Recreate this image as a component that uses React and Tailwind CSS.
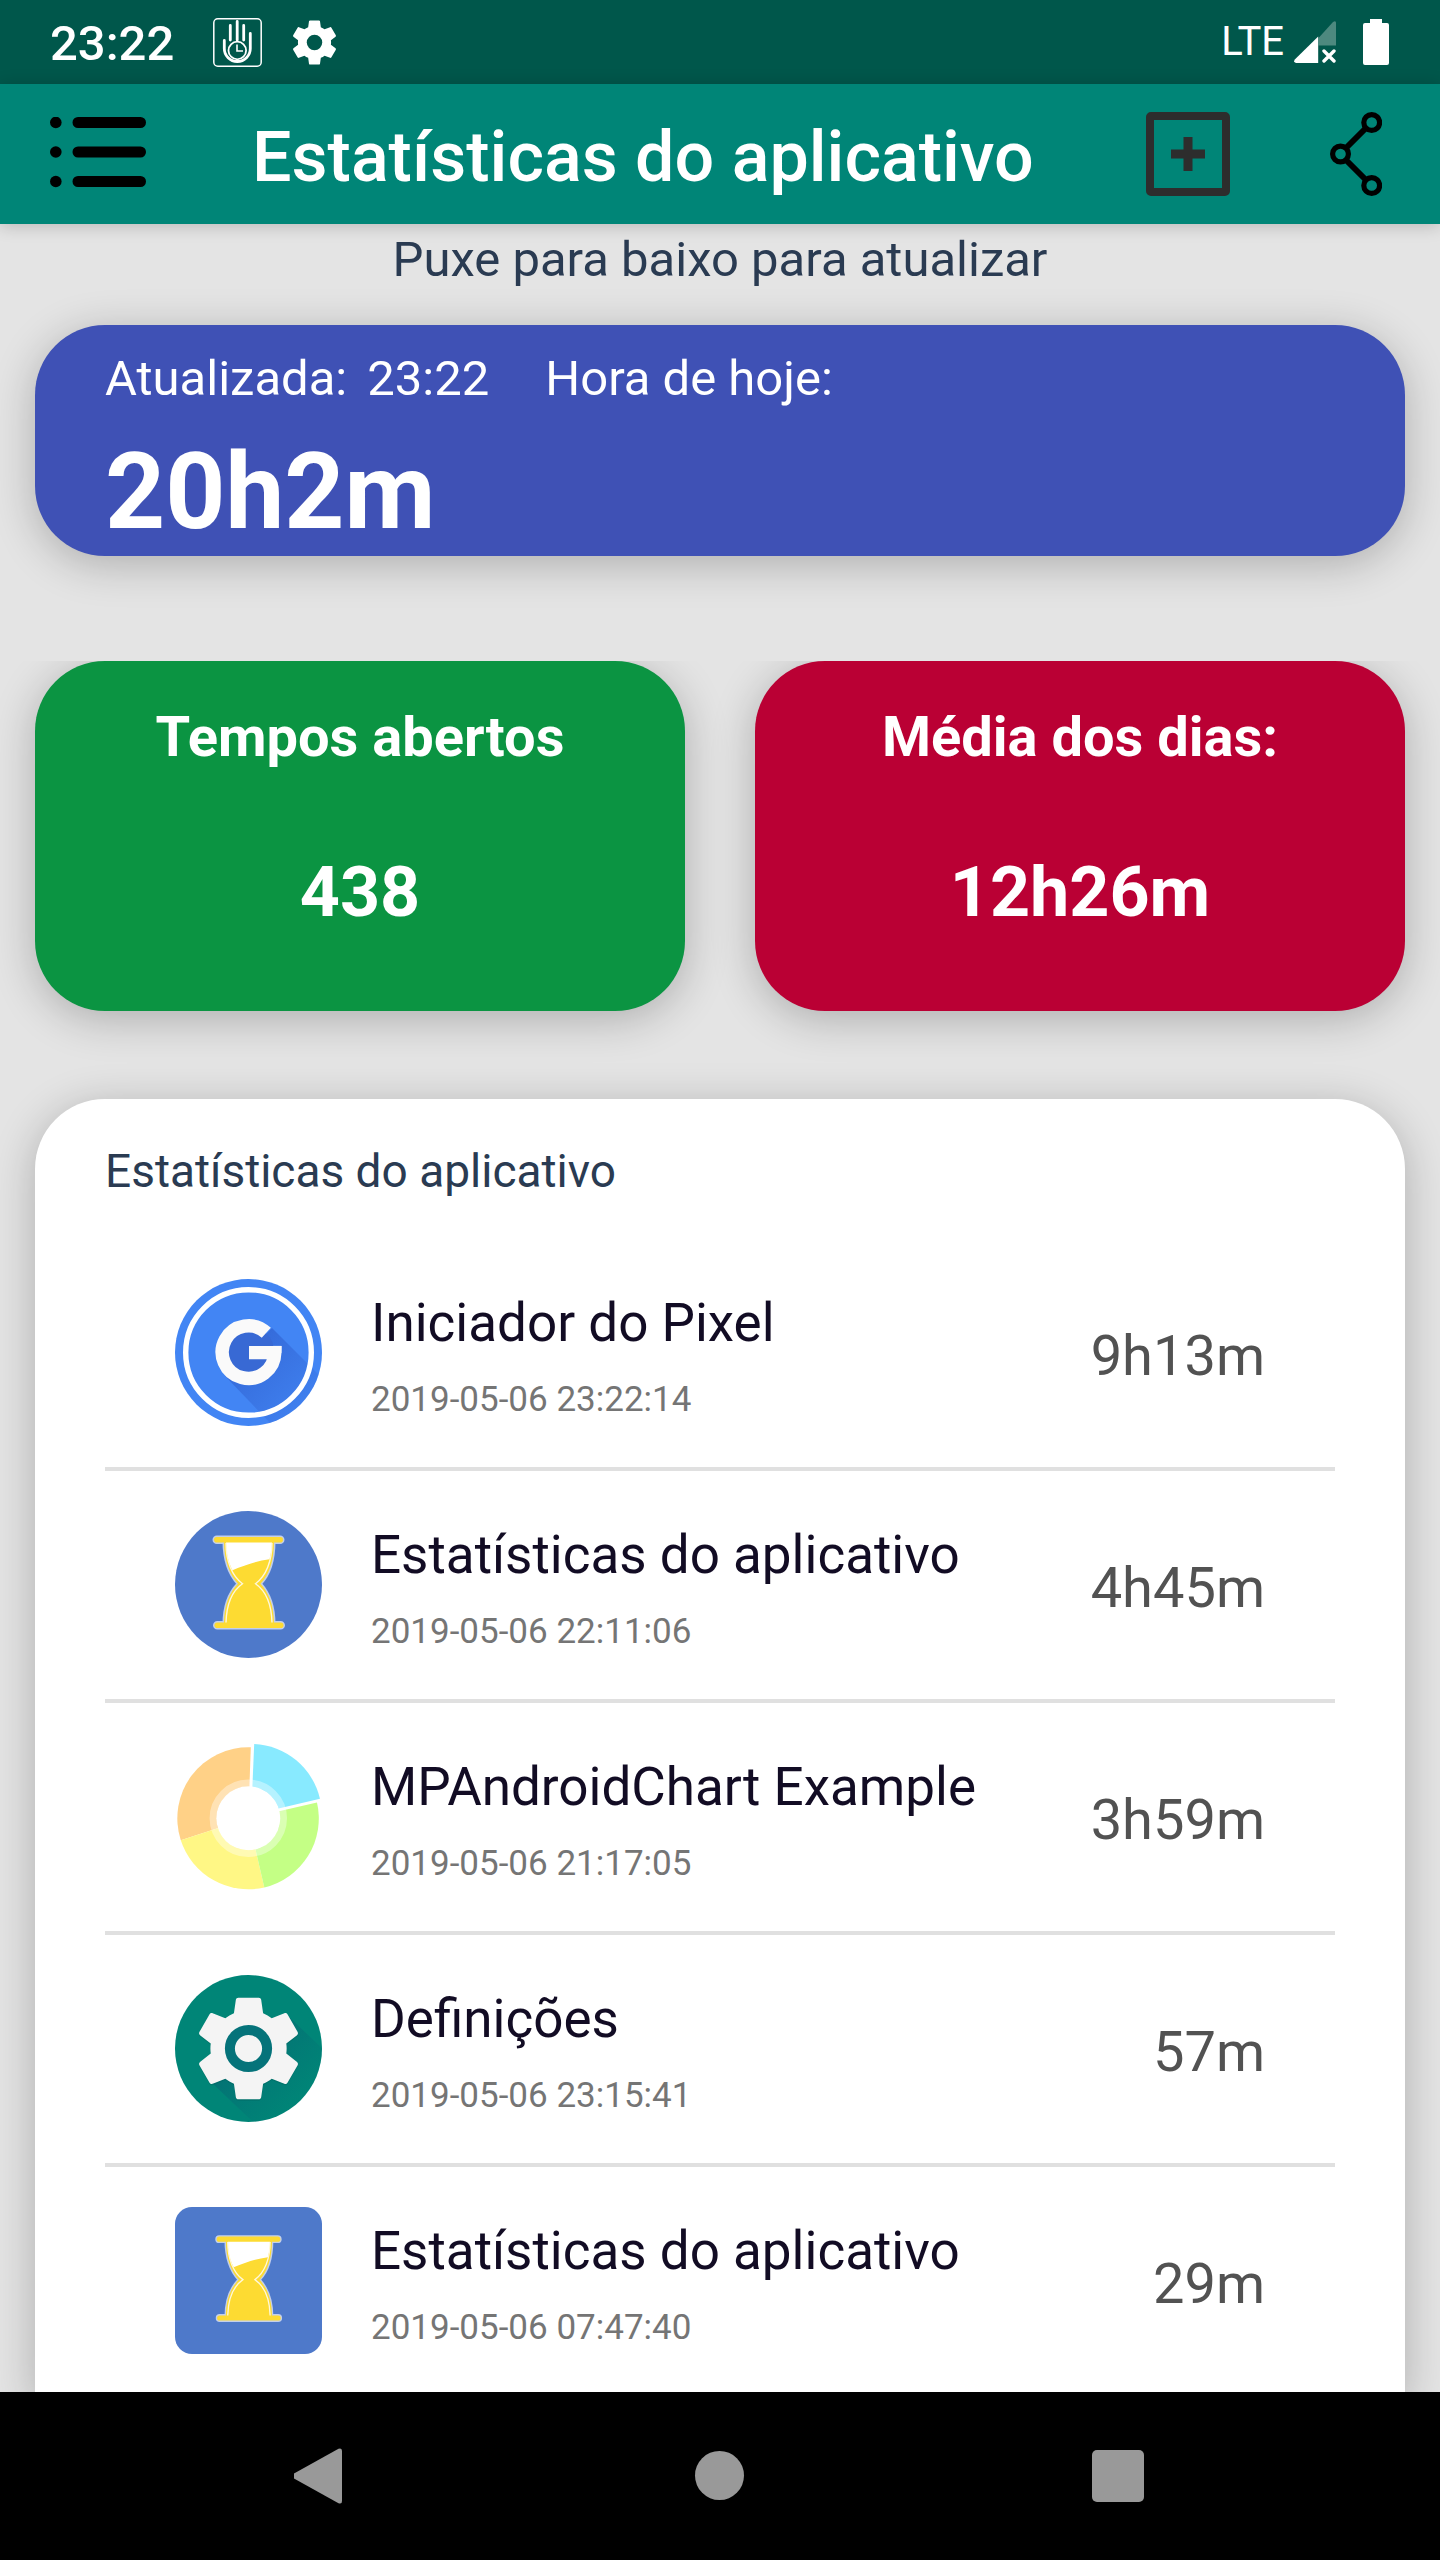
import React from 'react'

const GEAR = 'M19.43 12.98c.04-.32.07-.64.07-.98s-.03-.66-.07-.98l2.11-1.65c.19-.15.24-.42.12-.64l-2-3.46c-.12-.22-.39-.3-.61-.22l-2.49 1c-.52-.4-1.08-.73-1.69-.98l-.38-2.65C14.46 2.18 14.25 2 14 2h-4c-.25 0-.46.18-.49.42l-.38 2.65c-.61.25-1.17.59-1.69.98l-2.49-1c-.23-.09-.49 0-.61.22l-2 3.46c-.13.22-.07.49.12.64l2.11 1.65c-.04.32-.07.65-.07.98s.03.66.07.98l-2.11 1.65c-.19.15-.24.42-.12.64l2 3.46c.12.22.39.3.61.22l2.49-1c.52.4 1.08.73 1.69.98l.38 2.65c.03.24.24.42.49.42h4c.25 0 .46-.18.49-.42l.38-2.65c.61-.25 1.17-.59 1.69-.98l2.49 1c.23.09.49 0 .61-.22l2-3.46c.12-.22.07-.49-.12-.64l-2.11-1.65z'

const PixelIcon = () => (
  <svg viewBox='0 0 147 147' className='size-full' aria-hidden='true'>
    <defs>
      <linearGradient id='pixelShade' x1='60' y1='60' x2='126' y2='126' gradientUnits='userSpaceOnUse'>
        <stop offset='0' stopColor='#3367d6' />
        <stop offset='1' stopColor='#3367d6' stopOpacity='0.2' />
      </linearGradient>
      <clipPath id='pixelClip'><circle cx='73.5' cy='73.5' r='73.5' /></clipPath>
    </defs>
    <circle cx='73.5' cy='73.5' r='73.5' fill='#4285f4' />
    <g clipPath='url(#pixelClip)'>
      <path d='M97 49 L147 99 V147 H98 L50 97 Z' fill='url(#pixelShade)' />
      <circle cx='73.5' cy='73.5' r='26' fill='#3869d4' />
    </g>
    <circle cx='73.5' cy='73.5' r='62.8' fill='none' stroke='#fff' strokeWidth='5.4' />
    <path d='M91.3 53.8 A26.3 26.3 0 1 0 99.8 73.6 H74' fill='none' stroke='#fafafa' strokeWidth='13.4' />
    <rect x='98' y='66.9' width='8.4' height='7' fill='#fafafa' />
  </svg>
)

const Hourglass = () => (
  <g>
    <g fill='#fdd835' stroke='#c3cfea' strokeWidth='3'>
      <path d='M49 30 C49 50 55 64 63 72.7 C55 81 49 93 49 113 H99 C99 93 93 81 85.5 72.7 C94 64 99 50 99 30 Z' />
      <rect x='39' y='26' width='69' height='5.6' rx='2.8' />
      <rect x='39.5' y='111.5' width='69' height='5.6' rx='2.8' />
    </g>
    <g fill='#fddb32'>
      <path d='M49 30 C49 50 55 64 63 72.7 C55 81 49 93 49 113 H99 C99 93 93 81 85.5 72.7 C94 64 99 50 99 30 Z' />
      <rect x='39' y='26' width='69' height='5.6' rx='2.8' />
      <rect x='39.5' y='111.5' width='69' height='5.6' rx='2.8' />
    </g>
    <path d='M51 31.6 H97 C97 37 96 43 94.5 48.3 C82 50 70 54 57.5 59.3 C53 51 51 41 51 31.6 Z' fill='#fff' />
    <path d='M51 32 C51 50 57 65 67.5 72.7 C57 80 51.5 94 51 111.5 M97 32 C97 50 91 65 80.5 72.7 C91 80 96.5 94 97 111.5' fill='none' stroke='#fff8dc' strokeWidth='1.4' />
  </g>
)

const HourglassRoundIcon = () => (
  <svg viewBox='0 0 147 147' className='size-full' aria-hidden='true'>
    <circle cx='73.5' cy='73.5' r='73.5' fill='#4e79ca' />
    <Hourglass />
  </svg>
)

const HourglassSquareIcon = () => (
  <svg viewBox='0 0 147 147' className='size-full' aria-hidden='true'>
    <rect width='147' height='147' rx='17' fill='#4e79ca' />
    <g transform='translate(5.7 5.6) scale(0.922)'>
      <Hourglass />
    </g>
  </svg>
)

const ChartIcon = () => (
  <svg viewBox='0 0 147 147' className='size-full' aria-hidden='true'>
    <path d='M73.3 75.3 L75.8 4.3 A71 71 0 0 0 5.8 97.2 Z' fill='#ffd187' />
    <path d='M73.3 75.3 L5.8 97.2 A71 71 0 0 0 89.3 144.5 Z' fill='#fff785' />
    <path d='M73.3 75.3 L89.3 144.5 A71 71 0 0 0 142 59.5 Z' fill='#c4ff85' />
    <path d='M73.3 75.3 L77.2 2 L144 57 Z' fill='#fff' />
    <path d='M76.2 72 L79.2 1 A71 71 0 0 1 145 55.8 Z' fill='#88eaff' />
    <circle cx='73.3' cy='75.3' r='35.3' fill='none' stroke='#fff' strokeOpacity='0.38' strokeWidth='6.8' />
    <circle cx='73.3' cy='75.3' r='32' fill='#fff' />
  </svg>
)

const SettingsIcon = () => (
  <svg viewBox='0 0 147 147' className='size-full' aria-hidden='true'>
    <defs>
      <linearGradient id='gearShade' x1='50' y1='50' x2='122' y2='122' gradientUnits='userSpaceOnUse'>
        <stop offset='0' stopColor='#056b73' />
        <stop offset='1' stopColor='#056b73' stopOpacity='0.05' />
      </linearGradient>
      <clipPath id='gearClip'><circle cx='73.5' cy='73.5' r='73.5' /></clipPath>
    </defs>
    <circle cx='73.5' cy='73.5' r='73.5' fill='#008577' />
    <path d='M113 41 L150 76 V147 H78 L35 106 Z' fill='url(#gearShade)' clipPath='url(#gearClip)' />
    <g transform='translate(12.5 12.5) scale(5.085)'>
      <path d={GEAR} fill='#00564f' fillOpacity='0.25' transform='translate(0 0.25)' />
      <path d={GEAR} fill='#f4f4f4' />
    </g>
    <circle cx='73.5' cy='73.5' r='18.6' fill='#f4f4f4' stroke='#05737a' strokeWidth='10' />
  </svg>
)

const apps = [
  { name: 'Iniciador do Pixel', date: '2019-05-06 23:22:14', time: '9h13m', icon: PixelIcon },
  { name: 'Estatísticas do aplicativo', date: '2019-05-06 22:11:06', time: '4h45m', icon: HourglassRoundIcon },
  { name: 'MPAndroidChart Example', date: '2019-05-06 21:17:05', time: '3h59m', icon: ChartIcon },
  { name: 'Definições', date: '2019-05-06 23:15:41', time: '57m', icon: SettingsIcon },
  { name: 'Estatísticas do aplicativo', date: '2019-05-06 07:47:40', time: '29m', icon: HourglassSquareIcon },
]

const StatusBar = () => (
  <div className='flex h-[84px] shrink-0 items-center bg-[#00574b] pl-[50px] pr-[51px] text-white'>
    <span className='pt-1 text-[49px] leading-[60px] font-medium'>23:22</span>
    <svg viewBox='0 0 49 49' className='ml-[39px] size-[49px]' fill='none' stroke='#fff' aria-hidden='true'>
      <rect x='0.8' y='0.8' width='47.4' height='47.4' rx='4' strokeWidth='1.5' />
      <path d='M17.3 7.5 V22 M24.2 3.5 V22 M30.7 7.5 V22' strokeWidth='2.8' strokeLinecap='round' />
      <path d='M11.3 22.5 V30.5 A13 13 0 0 0 37.3 30.5 V15.5' strokeWidth='2.8' strokeLinecap='round' />
      <circle cx='24.3' cy='32.5' r='8.8' strokeWidth='1.8' />
      <path d='M24 26.5 V33 H30' strokeWidth='1.6' />
    </svg>
    <svg viewBox='0 0 24 24' className='ml-[26px] size-[53px]' aria-hidden='true'>
      <path d={GEAR} fill='#fff' />
      <circle cx='12' cy='12' r='3.5' fill='#00574b' />
    </svg>
    <div className='ml-auto flex items-center'>
      <span className='text-[40px] leading-[60px]'>LTE</span>
      <svg viewBox='0 0 42 42' className='ml-[10px] size-[42px]' aria-hidden='true'>
        <path d='M24.5 17 L39 1 Q42 -1 42 2 V24.5 H24.5 Z' fill='#4d897f' />
        <path d='M24.2 15.5 V42 H2 Q-1 41 0.8 38.5 Z' fill='#fff' />
        <path d='M30 30 L40 40 M40 30 L30 40' stroke='#fff' strokeWidth='3.4' strokeLinecap='round' />
      </svg>
      <svg viewBox='0 0 26 46' className='ml-[27px] h-[46px] w-[26px]' fill='#fff' aria-hidden='true'>
        <path d='M7 0 H19 V4 H24 Q26 4 26 6 V44 Q26 46 24 46 H2 Q0 46 0 44 V6 Q0 4 2 4 H7 Z' />
      </svg>
    </div>
  </div>
)

const AppBar = () => (
  <header className='z-10 flex h-[140px] shrink-0 items-center bg-[#008577] pl-[50px] pr-[58px] shadow-[0_2px_16px_rgba(0,0,0,0.2)]'>
    <button type='button' aria-label='Menu' className='shrink-0'>
      <svg viewBox='0 0 96 75' className='h-[75px] w-[96px]'>
        <g stroke='#000' strokeWidth='11' strokeLinecap='round'>
          <path d='M28 5.5 H90.5 M28 35 H90.5 M28 64.5 H90.5' />
        </g>
        <circle cx='5.8' cy='5.5' r='5.8' />
        <circle cx='5.8' cy='35' r='5.8' />
        <circle cx='5.8' cy='64.5' r='5.8' />
      </svg>
    </button>
    <h1 className='ml-[106px] flex-1 pt-1.5 text-[70px] leading-[84px] font-medium text-white'>Estatísticas do aplicativo</h1>
    <button type='button' aria-label='Adicionar' className='shrink-0'>
      <svg viewBox='0 0 84 84' className='size-[84px]' fill='none' stroke='#2d2d2d' strokeWidth='8'>
        <rect x='4' y='4' width='76' height='76' rx='1' strokeLinejoin='round' />
        <path d='M25 42 H59 M42 25 V59' strokeWidth='9' />
      </svg>
    </button>
    <button type='button' aria-label='Partilhar' className='ml-[100px] shrink-0'>
      <svg viewBox='0 0 52 84' className='h-[84px] w-[52px]' fill='none' stroke='#000'>
        <g strokeWidth='5.2'>
          <circle cx='41.7' cy='10.5' r='7.9' />
          <circle cx='10.5' cy='42' r='7.9' />
          <circle cx='41.7' cy='73.5' r='7.9' />
        </g>
        <path d='M36 16 L16 36 M16 48 L36 68' strokeWidth='6' />
      </svg>
    </button>
  </header>
)

const AppRow = ({ app }) => {
  const Icon = app.icon
  return (
    <li className='flex h-[232px] items-start border-b-4 border-[#e0e0e0] px-[70px] pt-10 last:border-b-0'>
      <div className='size-[147px] shrink-0'><Icon /></div>
      <div className='mt-3 ml-[49px] flex-1'>
        <div className='text-[53px] leading-[64px] text-[#120c24]'>{app.name}</div>
        <div className='mt-[22px] text-[35px] leading-[46px] text-[#757575]'>{app.date}</div>
      </div>
      <div className='mt-[42px] text-[56px] leading-[70px] text-[#525252]'>{app.time}</div>
    </li>
  )
}

const NavBar = () => (
  <nav className='z-10 flex h-[168px] shrink-0 items-center justify-center gap-[342px] bg-black'>
    <button type='button' aria-label='Voltar'>
      <svg viewBox='0 0 56 56' className='size-[56px]' fill='#999'>
        <path d='M0 25.5 L44.5 0.8 Q48 -0.5 48 3 V53 Q48 56.5 44.5 55.2 L0 30.5 Q-2.5 28 0 25.5 Z' />
      </svg>
    </button>
    <button type='button' aria-label='Início'>
      <svg viewBox='0 0 56 56' className='size-[56px]' fill='#999'>
        <circle cx='27.5' cy='27.5' r='24.5' />
      </svg>
    </button>
    <button type='button' aria-label='Recentes'>
      <svg viewBox='0 0 56 56' className='size-[56px]' fill='#999'>
        <rect x='2' y='2' width='52' height='52' rx='5' />
      </svg>
    </button>
  </nav>
)

const App = () => {
  return (
    <div className='flex h-screen flex-col bg-[#e4e4e4] font-[Roboto,sans-serif]'>
      <StatusBar />
      <AppBar />
      <main className='min-h-0 flex-1 overflow-x-hidden overflow-y-auto [scrollbar-width:none]'>
        <p className='text-center text-[49px] leading-[72px] text-[#2a3b52]'>Puxe para baixo para atualizar</p>

        <section className='mx-[35px] mt-[29px] rounded-[70px] bg-[#3f51b5] px-[70px] pt-6 pb-px text-white shadow-[0_8px_44px_rgba(0,0,0,0.24)]'>
          <div className='flex text-[49px] leading-[60px]'>
            <span>Atualizada:</span>
            <span className='ml-5'>23:22</span>
            <span className='ml-14'>Hora de hoje:</span>
          </div>
          <div className='mt-[22px] text-[105px] leading-[124px] font-bold'>20h2m</div>
        </section>

        <section className='mt-[105px] grid grid-cols-2 gap-[70px] overflow-hidden px-[35px] pb-[88px] text-center font-bold text-white'>
          <div className='rounded-[70px] bg-[#0b9442] pt-[42px] pb-[78px] shadow-[0_8px_44px_rgba(0,0,0,0.24)]'>
            <h2 className='text-[56px] leading-[68px]'>Tempos abertos</h2>
            <div className='mt-20 text-[70px] leading-[82px]'>438</div>
          </div>
          <div className='rounded-[70px] bg-[#ba0034] pt-[42px] pb-[78px] shadow-[0_8px_44px_rgba(0,0,0,0.24)]'>
            <h2 className='text-[56px] leading-[68px]'>Média dos dias:</h2>
            <div className='mt-20 text-[70px] leading-[82px]'>12h26m</div>
          </div>
        </section>

        <section className='mx-[35px] rounded-t-[70px] bg-white px-[70px] pt-[42px] shadow-[0_8px_44px_rgba(0,0,0,0.24)]'>
          <h2 className='text-[46px] leading-[60px] text-[#2a3b52]'>Estatísticas do aplicativo</h2>
          <ul className='mt-[38px]'>
            {apps.map((app, index) => <AppRow key={index} app={app} />)}
          </ul>
        </section>
      </main>
      <NavBar />
    </div>
  )
}

export default App
